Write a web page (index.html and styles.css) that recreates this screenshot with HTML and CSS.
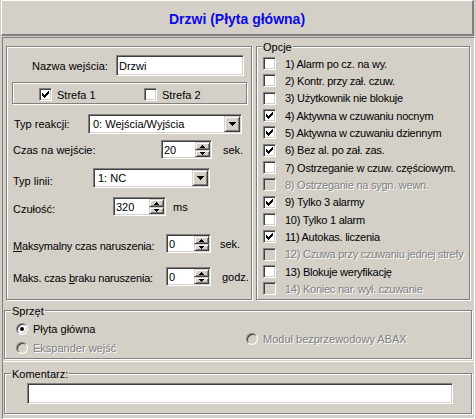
FILE: index.html
```html
<!DOCTYPE html>
<html>
<head>
<meta charset="utf-8">
<link rel="stylesheet" href="styles.css">
</head>
<body>
<div class="header"><span class="title">Drzwi (Płyta główna)</span></div>
<div class="main">
  <div class="top">
    <div class="box left">
      <div class="row r-name"><span class="lbl w-name">Nazwa wejścia:</span><div class="edit name">Drzwi</div></div>
      <div class="box strefa">
        <div class="chk-item s1"><span class="chk"><svg width="7" height="7" viewBox="0 0 7 7"><path d="M0 2h1v3h-1z M1 3h1v3h-1z M2 4h1v3h-1z M3 3h1v3h-1z M4 2h1v3h-1z M5 1h1v3h-1z M6 0h1v3h-1z" fill="#000"/></svg></span>Strefa 1</div>
        <div class="chk-item"><span class="chk"></span>Strefa 2</div>
      </div>
      <div class="row r-typ"><span class="lbl w-typ">Typ reakcji:</span>
        <div class="combo c-typ"><span class="ctxt">0: Wejścia/Wyjścia</span><span class="btn cbtn"><svg width="7" height="4" viewBox="0 0 7 4"><path d="M0 0H7V1H6V2H5V3H4V4H3V3H2V2H1V1H0Z" fill="#000"/></svg></span></div>
      </div>
      <div class="row r-czas"><span class="lbl w-czas">Czas na wejście:</span>
        <div class="spin s-czas"><span class="stxt">20</span><span class="sbtns"><span class="btn up"><svg width="5" height="3" viewBox="0 0 5 3"><path d="M2 0H3V1H4V2H5V3H0V2H1V1H2Z" fill="#000"/></svg></span><span class="btn dn"><svg width="5" height="3" viewBox="0 0 5 3"><path d="M0 0H5V1H4V2H3V3H2V2H1V1H0Z" fill="#000"/></svg></span></span></div>
        <span class="unit u-czas">sek.</span>
      </div>
      <div class="row r-linia"><span class="lbl w-linia">Typ linii:</span>
        <div class="combo c-linia"><span class="ctxt">1: NC</span><span class="btn cbtn"><svg width="7" height="4" viewBox="0 0 7 4"><path d="M0 0H7V1H6V2H5V3H4V4H3V3H2V2H1V1H0Z" fill="#000"/></svg></span></div>
      </div>
      <div class="row r-czul"><span class="lbl w-czul">Czułość:</span>
        <div class="spin s-czul"><span class="stxt">320</span><span class="sbtns"><span class="btn up"><svg width="5" height="3" viewBox="0 0 5 3"><path d="M2 0H3V1H4V2H5V3H0V2H1V1H2Z" fill="#000"/></svg></span><span class="btn dn"><svg width="5" height="3" viewBox="0 0 5 3"><path d="M0 0H5V1H4V2H3V3H2V2H1V1H0Z" fill="#000"/></svg></span></span></div>
        <span class="unit u-czul">ms</span>
      </div>
      <div class="row r-maks"><span class="lbl w-maks"><u>M</u>aksymalny czas naruszenia:</span>
        <div class="spin s-maks"><span class="stxt">0</span><span class="sbtns"><span class="btn up"><svg width="5" height="3" viewBox="0 0 5 3"><path d="M2 0H3V1H4V2H5V3H0V2H1V1H2Z" fill="#000"/></svg></span><span class="btn dn"><svg width="5" height="3" viewBox="0 0 5 3"><path d="M0 0H5V1H4V2H3V3H2V2H1V1H0Z" fill="#000"/></svg></span></span></div>
        <span class="unit u-maks">sek.</span>
      </div>
      <div class="row r-brak"><span class="lbl w-brak">Maks. czas <u>b</u>raku naruszenia:</span>
        <div class="spin s-maks"><span class="stxt">0</span><span class="sbtns"><span class="btn up"><svg width="5" height="3" viewBox="0 0 5 3"><path d="M2 0H3V1H4V2H5V3H0V2H1V1H2Z" fill="#000"/></svg></span><span class="btn dn"><svg width="5" height="3" viewBox="0 0 5 3"><path d="M0 0H5V1H4V2H3V3H2V2H1V1H0Z" fill="#000"/></svg></span></span></div>
        <span class="unit u-brak">godz.</span>
      </div>
    </div>
    <div class="box opcje">
      <span class="gtitle g-opcje">Opcje</span>
      <div class="opt"><span class="chk"></span>1) Alarm po cz. na wy.</div>
      <div class="opt"><span class="chk"></span>2) Kontr. przy zał. czuw.</div>
      <div class="opt"><span class="chk"></span>3) Użytkownik nie blokuje</div>
      <div class="opt"><span class="chk"><svg width="7" height="7" viewBox="0 0 7 7"><path d="M0 2h1v3h-1z M1 3h1v3h-1z M2 4h1v3h-1z M3 3h1v3h-1z M4 2h1v3h-1z M5 1h1v3h-1z M6 0h1v3h-1z" fill="#000"/></svg></span>4) Aktywna w czuwaniu nocnym</div>
      <div class="opt"><span class="chk"><svg width="7" height="7" viewBox="0 0 7 7"><path d="M0 2h1v3h-1z M1 3h1v3h-1z M2 4h1v3h-1z M3 3h1v3h-1z M4 2h1v3h-1z M5 1h1v3h-1z M6 0h1v3h-1z" fill="#000"/></svg></span>5) Aktywna w czuwaniu dziennym</div>
      <div class="opt"><span class="chk"><svg width="7" height="7" viewBox="0 0 7 7"><path d="M0 2h1v3h-1z M1 3h1v3h-1z M2 4h1v3h-1z M3 3h1v3h-1z M4 2h1v3h-1z M5 1h1v3h-1z M6 0h1v3h-1z" fill="#000"/></svg></span>6) Bez al. po zał. zas.</div>
      <div class="opt"><span class="chk"></span>7) Ostrzeganie w czuw. częściowym.</div>
      <div class="opt dis"><span class="chk"></span>8) Ostrzeganie na sygn. wewn.</div>
      <div class="opt"><span class="chk"><svg width="7" height="7" viewBox="0 0 7 7"><path d="M0 2h1v3h-1z M1 3h1v3h-1z M2 4h1v3h-1z M3 3h1v3h-1z M4 2h1v3h-1z M5 1h1v3h-1z M6 0h1v3h-1z" fill="#000"/></svg></span>9) Tylko 3 alarmy</div>
      <div class="opt"><span class="chk"></span>10) Tylko 1 alarm</div>
      <div class="opt"><span class="chk"><svg width="7" height="7" viewBox="0 0 7 7"><path d="M0 2h1v3h-1z M1 3h1v3h-1z M2 4h1v3h-1z M3 3h1v3h-1z M4 2h1v3h-1z M5 1h1v3h-1z M6 0h1v3h-1z" fill="#000"/></svg></span>11) Autokas. liczenia</div>
      <div class="opt dis"><span class="chk"></span>12) Czuwa przy czuwaniu jednej strefy</div>
      <div class="opt"><span class="chk"></span>13) Blokuje weryfikację</div>
      <div class="opt dis"><span class="chk"></span>14) Koniec nar. wył. czuwanie</div>
    </div>
  </div>
  <div class="box sprzet">
    <span class="gtitle">Sprzęt</span>
    <div class="scol">
      <div class="rrow"><span class="radio on"></span>Płyta główna</div>
      <div class="rrow dis"><span class="radio"></span>Ekspander wejść</div>
    </div>
    <div class="scol2">
      <div class="rrow dis"><span class="radio"></span>Moduł bezprzewodowy ABAX</div>
    </div>
  </div>
  <div class="lower">
    <div class="box koment">
      <span class="gtitle">Komentarz:</span>
      <div class="edit kom"></div>
    </div>
  </div>
</div>
</body>
</html>
```
FILE: styles.css
```css
* { box-sizing: border-box; }
html, body { margin: 0; padding: 0; }
body {
  width: 476px;
  height: 419px;
  overflow: hidden;
  background: #d4d0c8;
  font: 11px "Liberation Sans", Arial, sans-serif;
  color: #000;
}
.header {
  margin-left: 1px;
  width: 473px;
  height: 36px;
  border-top: 1px solid #fff;
  border-left: 1px solid #fff;
  border-right: 2px solid #808080;
  border-bottom: 2px solid #808080;
  display: flex;
  align-items: center;
  justify-content: center;
  padding-top: 2px;
}
.title { font-weight: bold; font-size: 14px; color: #0a0ae6; }
.main {
  margin: 1px 0 0 2px;
  width: 473px;
  height: 382px;
  border-top: 1px solid #808080;
  border-left: 1px solid #808080;
  border-right: 1px solid #fff;
  border-bottom: 1px solid #fff;
}
.top { display: flex; gap: 4px; margin: 8px 0 0 3px; }
.box {
  border: 1px solid #808080;
  box-shadow: inset 1px 1px 0 #fff, 1px 1px 0 #fff;
  position: relative;
}
.left { width: 246px; height: 254px; }
.opcje { width: 214px; height: 254px; padding: 8px 0 0 6px; }
.gtitle {
  position: absolute;
  left: 6px;
  top: -6px;
  background: #d4d0c8;
  padding: 0 1px;
  line-height: 13px;
}
.g-opcje { left: 5px; }
.row { display: flex; align-items: center; white-space: nowrap; }
.lbl { flex: none; }
.edit {
  height: 21px;
  background: #fff;
  border: 1px solid;
  border-color: #808080 #fff #fff #808080;
  box-shadow: inset 1px 1px 0 #404040, inset -1px -1px 0 #d4d0c8;
  padding-left: 2px;
  display: flex;
  align-items: center;
}
.r-name { margin-top: 8px; height: 21px; padding-left: 25px; }
.w-name { width: 84px; }
.name { width: 128px; }
.strefa {
  margin: 6px 0 0 5px;
  width: 235px;
  height: 22px;
  display: flex;
  align-items: center;
  padding: 3px 0 0 26px;
}
.chk-item { display: flex; align-items: center; }
.s1 { width: 105px; }
.chk {
  flex: none;
  width: 13px;
  height: 13px;
  background: #fff;
  border: 1px solid;
  border-color: #808080 #fff #fff #808080;
  box-shadow: inset 1px 1px 0 #404040, inset -1px -1px 0 #d4d0c8;
  margin-right: 5px;
}
.chk svg { display: block; margin: 2px 0 0 2px; }
.opt { height: 17.33px; display: flex; align-items: center; white-space: nowrap; letter-spacing: -0.25px; }
.opt .chk { margin-right: 9px; }
.dis { color: #808080; text-shadow: 1px 1px 0 #fff; }
.dis .chk, .dis .radio { background: #d4d0c8; }
.btn {
  background: #d4d0c8;
  border: 1px solid;
  border-color: #d4d0c8 #404040 #404040 #d4d0c8;
  box-shadow: inset 1px 1px 0 #fff, inset -1px -1px 0 #808080;
  display: flex;
  align-items: center;
  justify-content: center;
}
.btn svg { display: block; }
.combo {
  height: 20px;
  background: #fff;
  border: 1px solid;
  border-color: #808080 #fff #fff #808080;
  box-shadow: inset 1px 1px 0 #404040, inset -1px -1px 0 #d4d0c8;
  display: flex;
}
.ctxt { flex: 1; padding-left: 4px; display: flex; align-items: center; }
.cbtn { width: 16px; margin: 1px 1px 1px 0; }
.spin {
  height: 19px;
  background: #fff;
  border: 1px solid;
  border-color: #808080 #fff #fff #808080;
  box-shadow: inset 1px 1px 0 #404040, inset -1px -1px 0 #d4d0c8;
  display: flex;
}
.stxt { flex: 1; padding-left: 2px; display: flex; align-items: center; }
.sbtns { width: 15px; margin: 1px 1px 1px 0; display: flex; flex-direction: column; }
.up { height: 8px; }
.dn { flex: 1; }
.r-typ { margin-top: 10px; height: 20px; padding-left: 7px; }
.w-typ { width: 74px; }
.c-typ { width: 154px; }
.r-czas { margin-top: 6px; height: 19px; padding-left: 6px; }
.w-czas { width: 148px; padding-top: 1px; }
.s-czas { width: 51px; }
.u-czas { margin-left: 11px; }
.r-linia { margin-top: 9px; height: 20px; padding-left: 6px; }
.w-linia { width: 80px; padding-top: 5px; }
.c-linia { width: 117px; }
.r-czul { margin-top: 9px; height: 19px; padding-left: 6px; }
.w-czul { width: 100px; padding-top: 4px; }
.s-czul { width: 53px; }
.u-czul { margin-left: 7px; }
.r-maks { margin-top: 18px; height: 19px; padding-left: 6px; }
.w-maks { width: 153px; padding-top: 4px; letter-spacing: -0.2px; }
.s-maks { width: 45px; }
.u-maks { margin-left: 9px; }
.r-brak { margin-top: 14px; height: 19px; padding-left: 6px; }
.w-brak { width: 153px; padding-top: 2px; letter-spacing: -0.2px; }
.u-brak { margin-left: 11px; }
.sprzet {
  margin: 10px 0 0 1px;
  width: 468px;
  height: 49px;
  display: flex;
  padding-top: 8px;
}
.scol { width: 241px; padding-left: 11px; }
.scol2 { display: flex; align-items: center; }
.rrow { height: 19px; display: flex; align-items: center; white-space: nowrap; }
.radio {
  flex: none;
  width: 12px;
  height: 12px;
  border-radius: 50%;
  border: 1px solid;
  border-color: #808080 #fff #fff #808080;
  box-shadow: inset 1px 1px 0 #404040, inset -1px -1px 0 #d4d0c8;
  background: #fff;
  margin-right: 5px;
  display: flex;
  align-items: center;
  justify-content: center;
}
.radio.on::after {
  content: "";
  width: 4px;
  height: 4px;
  border-radius: 50%;
  background: #000;
}
.lower { margin-top: 2px; border-top: 1px solid #fff; padding: 11px 0 0 1px; }
.koment { width: 468px; height: 41px; padding: 9px 0 0 22px; }
.kom { width: 426px; }
```
